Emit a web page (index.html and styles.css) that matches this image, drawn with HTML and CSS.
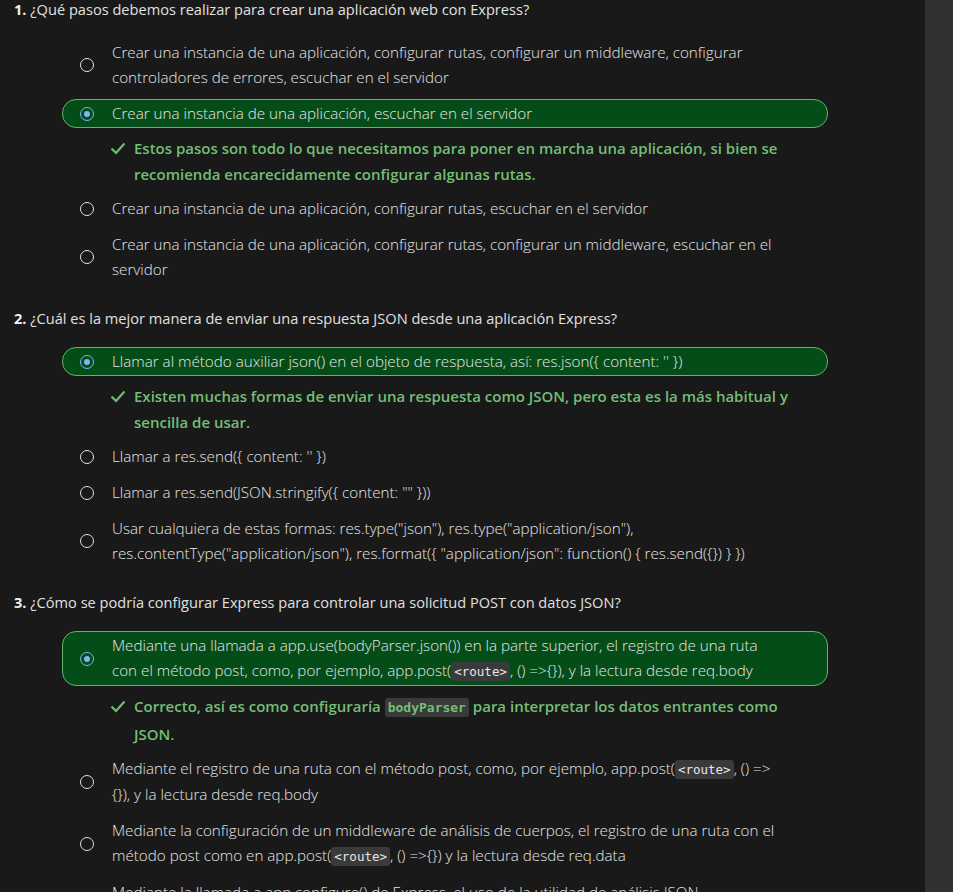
FILE: index.html
```html
<!DOCTYPE html>
<html lang="es">
<head>
<meta charset="utf-8">
<title>Cuestionario Express</title>
<link rel="stylesheet" href="styles.css">
</head>
<body>
<div class="layout">
  <main class="quiz">
    <section class="question">
      <h2 class="q-title"><b>1.</b> ¿Qué pasos debemos realizar para crear una aplicación web con Express?</h2>
      <div class="options">
        <div class="option"><span class="radio"></span><span class="opt-text">Crear una instancia de una aplicación, configurar rutas, configurar un middleware, configurar controladores de errores, escuchar en el servidor</span></div>
        <div class="option selected"><span class="radio"></span><span class="opt-text">Crear una instancia de una aplicación, escuchar en el servidor</span></div>
        <div class="feedback"><svg class="check" viewBox="0 0 16 16" width="16" height="16"><path d="M1.5 8.5 L6 13 L14.5 3.5" fill="none" stroke="currentColor" stroke-width="2.2"/></svg><span>Estos pasos son todo lo que necesitamos para poner en marcha una aplicación, si bien se recomienda encarecidamente configurar algunas rutas.</span></div>
        <div class="option"><span class="radio"></span><span class="opt-text">Crear una instancia de una aplicación, configurar rutas, escuchar en el servidor</span></div>
        <div class="option"><span class="radio"></span><span class="opt-text">Crear una instancia de una aplicación, configurar rutas, configurar un middleware, escuchar en el servidor</span></div>
      </div>
    </section>
    <section class="question">
      <h2 class="q-title"><b>2.</b> ¿Cuál es la mejor manera de enviar una respuesta JSON desde una aplicación Express?</h2>
      <div class="options">
        <div class="option selected"><span class="radio"></span><span class="opt-text">Llamar al método auxiliar json() en el objeto de respuesta, así: res.json({ content: '' })</span></div>
        <div class="feedback"><svg class="check" viewBox="0 0 16 16" width="16" height="16"><path d="M1.5 8.5 L6 13 L14.5 3.5" fill="none" stroke="currentColor" stroke-width="2.2"/></svg><span>Existen muchas formas de enviar una respuesta como JSON, pero esta es la más habitual y sencilla de usar.</span></div>
        <div class="option"><span class="radio"></span><span class="opt-text">Llamar a res.send({ content: '' })</span></div>
        <div class="option"><span class="radio"></span><span class="opt-text">Llamar a res.send(JSON.stringify({ content: "" }))</span></div>
        <div class="option"><span class="radio"></span><span class="opt-text">Usar cualquiera de estas formas: res.type("json"), res.type("application/json"), res.contentType("application/json"), res.format({ "application/json": function() { res.send({}) } })</span></div>
      </div>
    </section>
    <section class="question">
      <h2 class="q-title"><b>3.</b> ¿Cómo se podría configurar Express para controlar una solicitud POST con datos JSON?</h2>
      <div class="options">
        <div class="option selected"><span class="radio"></span><span class="opt-text">Mediante una llamada a app.use(bodyParser.json()) en la parte superior, el registro de una ruta con el método post, como, por ejemplo, app.post(<code>&lt;route&gt;</code>, () =&gt;{}), y la lectura desde req.body</span></div>
        <div class="feedback"><svg class="check" viewBox="0 0 16 16" width="16" height="16"><path d="M1.5 8.5 L6 13 L14.5 3.5" fill="none" stroke="currentColor" stroke-width="2.2"/></svg><span>Correcto, así es como configuraría <code class="fb-code">bodyParser</code> para interpretar los datos entrantes como JSON.</span></div>
        <div class="option"><span class="radio"></span><span class="opt-text">Mediante el registro de una ruta con el método post, como, por ejemplo, app.post(<code>&lt;route&gt;</code>, () =&gt; {}), y la lectura desde req.body</span></div>
        <div class="option"><span class="radio"></span><span class="opt-text">Mediante la configuración de un middleware de análisis de cuerpos, el registro de una ruta con el método post como en app.post(<code>&lt;route&gt;</code>, () =&gt;{}) y la lectura desde req.data</span></div>
        <div class="option"><span class="radio"></span><span class="opt-text">Mediante la llamada a app.configure() de Express, el uso de la utilidad de análisis JSON predeterminada, y la lectura desde req.body</span></div>
      </div>
    </section>
  </main>
  <div class="scrollbar"></div>
</div>
</body>
</html>
```

FILE: styles.css
```css
html, body {
  margin: 0;
  padding: 0;
  background: #191919;
  height: 100%;
  overflow: hidden;
}

body {
  font-family: "Open Sans", "Noto Sans", sans-serif;
  color: #d4d4d4;
}

.layout {
  display: flex;
  height: 892px;
  overflow: hidden;
}

.quiz {
  flex: 1;
  padding: 0 0 0 14px;
  margin-top: -1px;
}

.scrollbar {
  width: 28px;
  flex: none;
  background: #313131;
}

.question {
  margin-bottom: 24px;
}

.q-title {
  margin: 0 0 19px 0;
  font-size: 14.6px;
  font-weight: 400;
  line-height: 20px;
  color: #e0e0e0;
}

.q-title b {
  font-weight: 700;
  color: #f0f0f0;
}

.options {
  margin-left: 48px;
  width: 766px;
  display: flex;
  flex-direction: column;
  gap: 7px;
}

.option {
  display: flex;
  align-items: center;
  padding: 1px 45px 1px 17px;
  border: 1px solid transparent;
  border-radius: 14px;
  font-size: 15.2px;
  font-weight: 300;
  line-height: 25px;
  color: #e6e6e6;
}

.option.selected {
  background: #054d18;
  border-color: #62b566;
}

.radio {
  flex: none;
  width: 12px;
  height: 12px;
  border: 1px solid #e0e0e0;
  border-radius: 50%;
  margin-right: 18px;
  position: relative;
}

.option.selected .radio {
  border-color: #79b8f0;
}

.option.selected .radio::after {
  content: "";
  position: absolute;
  left: 3px;
  top: 3px;
  width: 6px;
  height: 6px;
  border-radius: 50%;
  background: #79b8f0;
}

.opt-text code {
  font-family: "DejaVu Sans Mono", "Liberation Mono", monospace;
  font-size: 12.5px;
  background: #3a3a3a;
  color: #e6e6e6;
  padding: 2px 3px;
  border-radius: 3px;
}

.feedback {
  display: flex;
  align-items: flex-start;
  padding: 0 40px 0 48px;
  color: #72bf75;
  font-size: 15px;
  font-weight: 600;
  line-height: 26px;
}

.check {
  flex: none;
  margin: 5px 8px 0 0;
  color: #72bf75;
}

.fb-code {
  font-family: "DejaVu Sans Mono", "Liberation Mono", monospace;
  font-size: 13px;
  font-weight: 700;
  background: #3a3a3a;
  color: #72bf75;
  padding: 2px 3px;
  border-radius: 3px;
}
```
